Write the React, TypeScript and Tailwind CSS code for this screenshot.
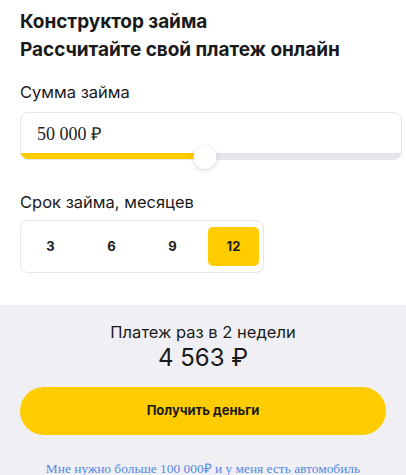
import { useState } from "react";

const terms = [3, 6, 9, 12];

export default function App() {
  const [term, setTerm] = useState(12);
  const amount = 50000;
  const min = 1000;
  const max = 100000;
  const percent = ((amount - min) / (max - min)) * 100 - 1;

  return (
    <div className="w-[406px] min-h-[475px] bg-white font-['Inter',sans-serif] text-[#1a1a1a]">
      <div className="px-5 pt-[8px]">
        <h1 className="text-[19px] font-bold leading-[28px] tracking-[-0.05px]">
          Конструктор займа
          <br />
          Рассчитайте свой платеж онлайн
        </h1>

        <div className="mt-[16px] text-[16.5px] leading-[24px]">Сумма займа</div>
        <div className="relative mt-[8px] w-[382px]">
          <div className="overflow-hidden rounded-[8px] border border-[#e6e6eb]">
            <div className="flex h-[40px] items-center px-4 pt-[2px] font-['Liberation_Serif',serif] text-[18px] text-[#222]">
              50 000 ₽
            </div>
            <div className="flex h-[6px] bg-[#e5e5ea]">
              <div className="h-full bg-[#ffcc00]" style={{ width: `${percent}%` }} />
            </div>
          </div>
          <div
            className="absolute top-[34px] h-[23px] w-[23px] -translate-x-1/2 rounded-full bg-white shadow-[0_1px_4px_rgba(0,0,0,0.18)]"
            style={{ left: `${percent}%` }}
          />
        </div>

        <div className="mt-[30px] text-[16.5px] leading-[24px]">Срок займа, месяцев</div>
        <div className="mt-[6px] flex w-[244px] gap-[10px] rounded-[8px] border border-[#e6e6eb] px-[4px] py-[6px]">
          {terms.map((t) => (
            <button
              key={t}
              onClick={() => setTerm(t)}
              className={`flex h-[39px] w-[51px] items-center justify-center rounded-[5px] text-[13px] font-bold ${
                term === t ? "bg-[#ffcc00]" : "bg-transparent"
              }`}
            >
              {t}
            </button>
          ))}
        </div>
      </div>

      <div className="mt-[32px] bg-[#f0f0f4] px-5 pb-[10px] pt-[16px]">
        <div className="text-center text-[16.5px] leading-[22px]">Платеж раз в 2 недели</div>
        <div className="text-center text-[24px] font-normal leading-[30px]">4 563 ₽</div>
        <button className="mt-[14px] flex h-[48px] w-full items-center justify-center rounded-full bg-[#ffcc00] text-[13px] font-bold">
          Получить деньги
        </button>
        <div className="mt-[26px] text-center font-['Liberation_Serif',serif] text-[13.4px] leading-[16px] text-[#5288e6]">
          Мне нужно больше 100 000₽ и у меня есть автомобиль
        </div>
      </div>
    </div>
  );
}
